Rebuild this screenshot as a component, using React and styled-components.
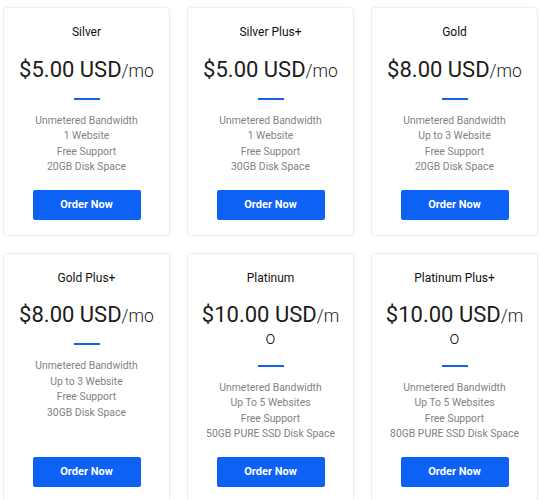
import React from 'react';
import styled, { createGlobalStyle } from 'styled-components';

const GlobalStyle = createGlobalStyle`
  body {
    margin: 0;
    background: #ffffff;
    font-family: Roboto, "Liberation Sans", Arial, sans-serif;
  }
`;

const Grid = styled.div`
  display: grid;
  grid-template-columns: repeat(3, 167px);
  column-gap: 17px;
  row-gap: 17px;
  padding: 7px 0 0 3px;
`;

const Card = styled.div`
  display: flex;
  flex-direction: column;
  align-items: center;
  text-align: center;
  background: #fff;
  border: 1px solid #eeeeee;
  border-radius: 4px;
  box-shadow: 0 0 4px rgba(0, 0, 0, 0.03);
  padding: 16px 12px 15px;
`;

const Name = styled.h3`
  margin: 0;
  font-size: 12px;
  line-height: 16px;
  font-weight: 400;
  color: #111;
`;

const Price = styled.div`
  margin-top: 18.5px;
  width: 100%;
  font-size: 22px;
  line-height: 21px;
  font-weight: 400;
  color: #1b1b1b;
  word-break: break-all;
`;

const Per = styled.span`
  font-size: 17.5px;
  line-height: 1;
  font-weight: 300;
`;

const Rule = styled.div`
  width: 26px;
  height: 2px;
  margin-top: 17.5px;
  background: #1463e6;
`;

const Features = styled.ul`
  list-style: none;
  margin: 13px 0 0;
  padding: 0;
  font-size: 10.4px;
  line-height: 15.5px;
  color: #828282;
`;

const Spacer = styled.div`
  min-height: 15px;
  flex: 1;
`;

const OrderButton = styled.button`
  width: 108px;
  height: 30px;
  border: none;
  border-radius: 2px;
  background: #0d62f5;
  color: #fff;
  font-family: inherit;
  font-size: 11px;
  font-weight: 700;
  cursor: pointer;
`;

const plans = [
  { name: 'Silver', price: '$5.00 USD', features: ['Unmetered Bandwidth', '1 Website', 'Free Support', '20GB Disk Space'] },
  { name: 'Silver Plus+', price: '$5.00 USD', features: ['Unmetered Bandwidth', '1 Website', 'Free Support', '30GB Disk Space'] },
  { name: 'Gold', price: '$8.00 USD', features: ['Unmetered Bandwidth', 'Up to 3 Website', 'Free Support', '20GB Disk Space'] },
  { name: 'Gold Plus+', price: '$8.00 USD', features: ['Unmetered Bandwidth', 'Up to 3 Website', 'Free Support', '30GB Disk Space'] },
  { name: 'Platinum', price: '$10.00 USD', features: ['Unmetered Bandwidth', 'Up To 5 Websites', 'Free Support', '50GB PURE SSD Disk Space'] },
  { name: 'Platinum Plus+', price: '$10.00 USD', features: ['Unmetered Bandwidth', 'Up To 5 Websites', 'Free Support', '80GB PURE SSD Disk Space'] },
];

export default function App() {
  return (
    <>
      <GlobalStyle />
      <Grid>
        {plans.map((p) => (
          <Card key={p.name}>
            <Name>{p.name}</Name>
            <Price>
              {p.price}
              <Per>/mo</Per>
            </Price>
            <Rule />
            <Features>
              {p.features.map((f) => (
                <li key={f}>{f}</li>
              ))}
            </Features>
            <Spacer />
            <OrderButton>Order Now</OrderButton>
          </Card>
        ))}
      </Grid>
    </>
  );
}
